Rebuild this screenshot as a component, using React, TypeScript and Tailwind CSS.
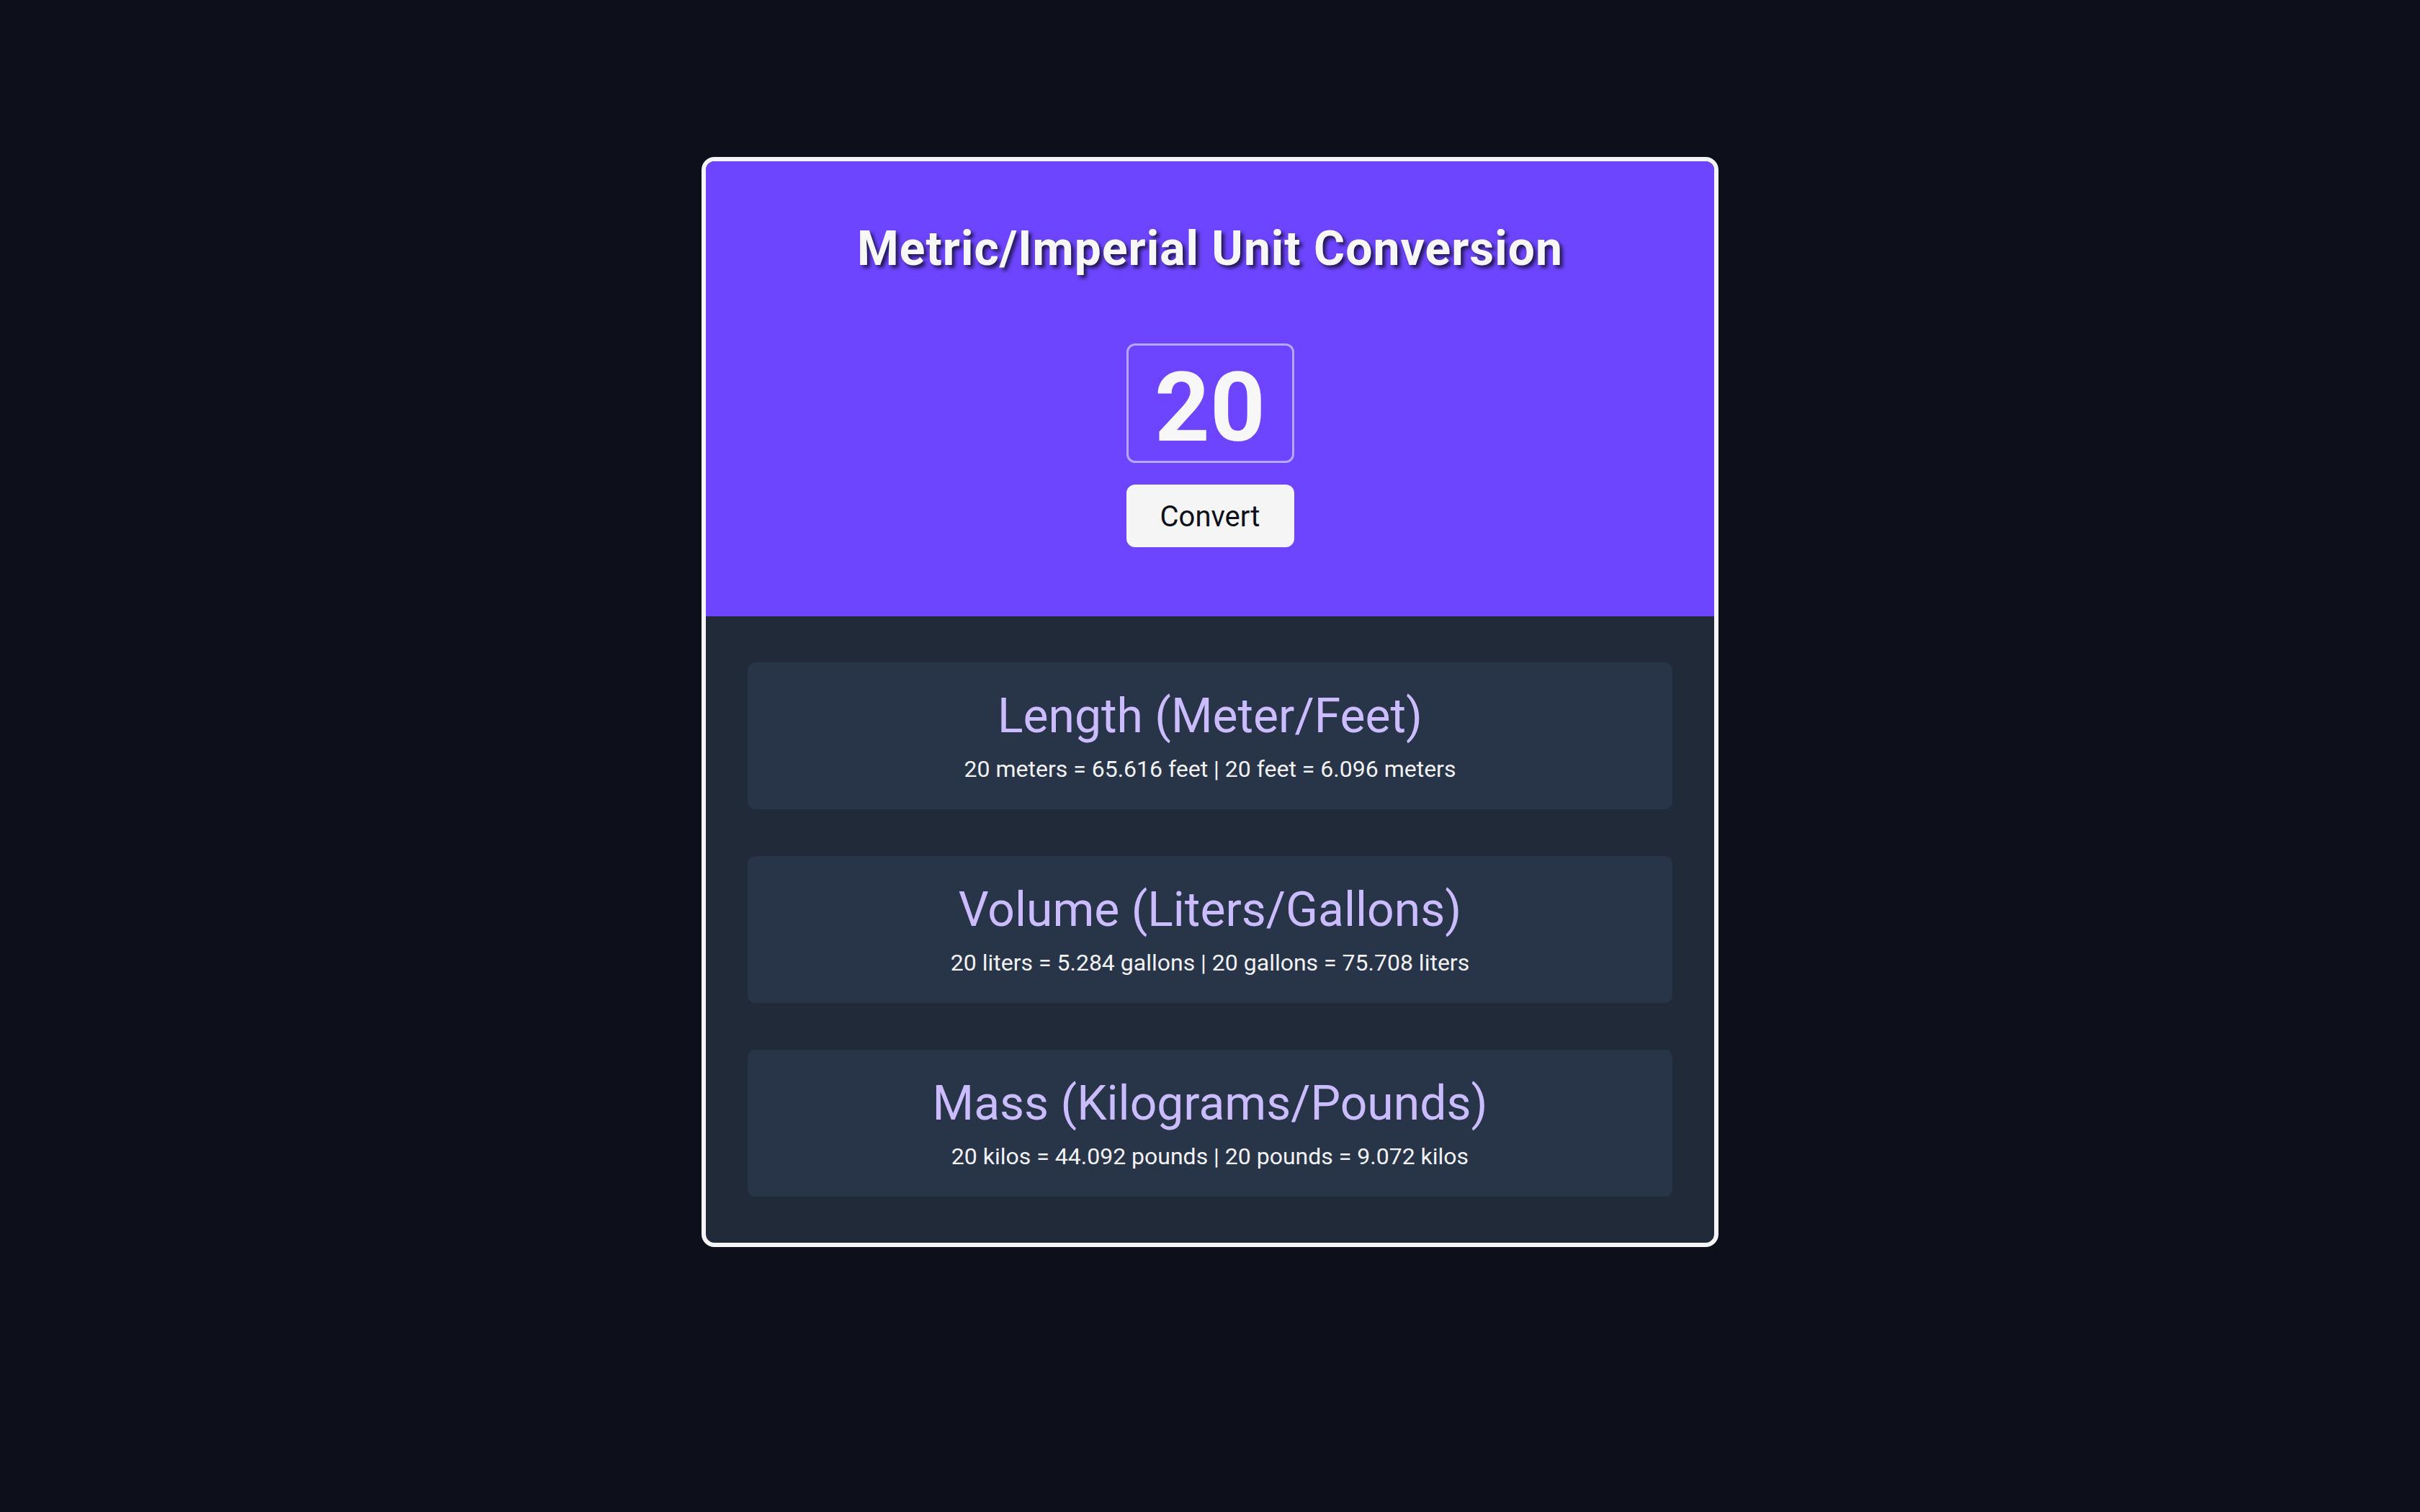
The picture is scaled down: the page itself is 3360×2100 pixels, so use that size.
import React from "react";

const font = { fontFamily: "Roboto, 'Noto Sans', sans-serif" };

function Box({ title, text }: { title: string; text: string }) {
  return (
    <div className="h-[204px] rounded-[10px] bg-[#283447] flex flex-col items-center justify-center">
      <div className="text-[66px] leading-none text-[#cbbcff] mt-[2px]">{title}</div>
      <div className="mt-[24px] text-[32px] leading-none text-[#f2f2f5]">{text}</div>
    </div>
  );
}

export default function App() {
  return (
    <div className="min-h-screen bg-[#0d101b] flex justify-center pt-[218px]" style={font}>
      <div className="w-[1412px] h-[1514px] border-[6px] border-[#f5f5f7] rounded-[18px] overflow-hidden bg-[#212a38] flex flex-col">
        <div className="h-[632px] bg-[#6e45ff] flex flex-col items-center pt-[89px]">
          <h1
            className="h-[66px] text-[66px] leading-none font-bold text-[#f7f7f7] tracking-[1px]"
            style={{ textShadow: "4px 4px 5px rgba(20,16,50,0.85)" }}
          >
            Metric/Imperial Unit Conversion
          </h1>
          <div className="mt-[98px] w-[233px] h-[166px] border-[3px] border-[#b4a6fb] rounded-[12px] flex items-center justify-center">
            <span className="text-[134px] leading-none font-bold text-[#f7f7f7] mt-[14px]">20</span>
          </div>
          <button className="mt-[30px] w-[233px] h-[87px] rounded-[12px] bg-[#f5f5f5] text-[40px] text-[#0d101b] flex items-center justify-center pt-[3px]">
            Convert
          </button>
        </div>
        <div className="flex-1 px-[58px] py-[64px] flex flex-col gap-[65px]">
          <Box title="Length (Meter/Feet)" text="20 meters = 65.616 feet | 20 feet = 6.096 meters" />
          <Box title="Volume (Liters/Gallons)" text="20 liters = 5.284 gallons | 20 gallons = 75.708 liters" />
          <Box title="Mass (Kilograms/Pounds)" text="20 kilos = 44.092 pounds | 20 pounds = 9.072 kilos" />
        </div>
      </div>
    </div>
  );
}
